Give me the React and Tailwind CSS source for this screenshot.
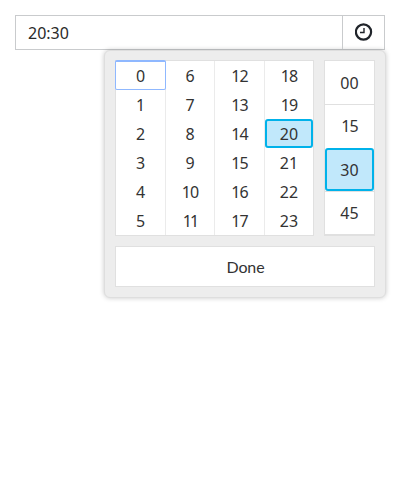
const hours = [
  [0, 1, 2, 3, 4, 5],
  [6, 7, 8, 9, 10, 11],
  [12, 13, 14, 15, 16, 17],
  [18, 19, 20, 21, 22, 23],
];
const minutes = ['00', '15', '30', '45'];

function Hour({ value }) {
  let state = 'h-[29px] pt-px';
  if (value === 0) state = 'relative z-10 -ml-px -mr-px -mt-px h-[30px] rounded-[2px] border border-t-2 border-[#8fb8ff]';
  else if (value === 20) state = 'h-[29px] pt-px rounded-[3px] border-2 border-[#00b2ea] bg-[#c1e8fb]';
  return (
    <button className={`flex items-center justify-center leading-none ${state}`}>
      <span className={value === 11 ? 'tracking-[-1.8px]' : value > 9 && value < 20 ? 'tracking-[-0.8px]' : ''}>{value}</span>
    </button>
  );
}

function Minute({ value }) {
  return (
    <button
      className={`flex h-[43px] w-full items-center justify-center leading-none ${
        value === '30' ? 'rounded-[3px] border-2 border-[#00b2ea] bg-[#c1e8fb]' : value === '00' ? '' : 'pb-px'
      }`}
    >
      <span className={value === '15' ? 'tracking-[-0.8px]' : ''}>{value}</span>
    </button>
  );
}

export default function App() {
  return (
    <main className="h-[500px] w-[400px] overflow-hidden bg-white pl-[15px] pt-[15px] font-['Noto_Sans',sans-serif] text-base text-[#333]">
      <div className="flex h-[35px] w-[370px] border border-[#c9cbcd] font-normal text-[#2a2a2a]">
        <div className="flex w-[327px] items-center border-r border-[#c9cbcd] pl-3 leading-none">20:30</div>
        <button aria-label="Choose time" className="flex flex-1 items-center justify-center pb-px">
          <svg width="18" height="18" viewBox="0 0 18 18" fill="none" stroke="#20242a">
            <circle cx="8.5" cy="9" r="7.6" strokeWidth="2.2" />
            <path d="M9 5v4.5H5" strokeWidth="1.4" />
          </svg>
        </button>
      </div>
      <section className="ml-[89px] h-[248px] w-[282px] rounded-[6px] border border-[#dedede] bg-[#ededed] px-[10px] pt-[9px] shadow-[0_0_5px_rgba(0,0,0,0.22)]">
        <div className="flex gap-[10px]">
          <div className="grid h-[176px] w-[199px] grid-cols-[50px_49px_50px_48px] border border-[#e0e0e0] bg-white">
            {hours.map((column, i) => (
              <div key={i} className={`flex flex-col ${i < 3 ? 'border-r border-[#ebebeb]' : ''}`}>
                {column.map((value) => <Hour key={value} value={value} />)}
              </div>
            ))}
          </div>
          <div className="flex h-[176px] w-[51px] flex-col border border-b-2 border-[#e0e0e0] bg-white">
            {minutes.map((value, i) => (
              <div key={value} className={i === 0 || i === 2 ? 'border-b border-[#e0e0e0]' : ''}>
                <Minute value={value} />
              </div>
            ))}
          </div>
        </div>
        <button className="mt-[10px] flex h-[41px] w-[260px] items-center justify-center border border-[#e0e0e0] bg-white pt-px pl-px font-['Lato',sans-serif] leading-none tracking-[-0.1px]">Done</button>
      </section>
    </main>
  );
}
